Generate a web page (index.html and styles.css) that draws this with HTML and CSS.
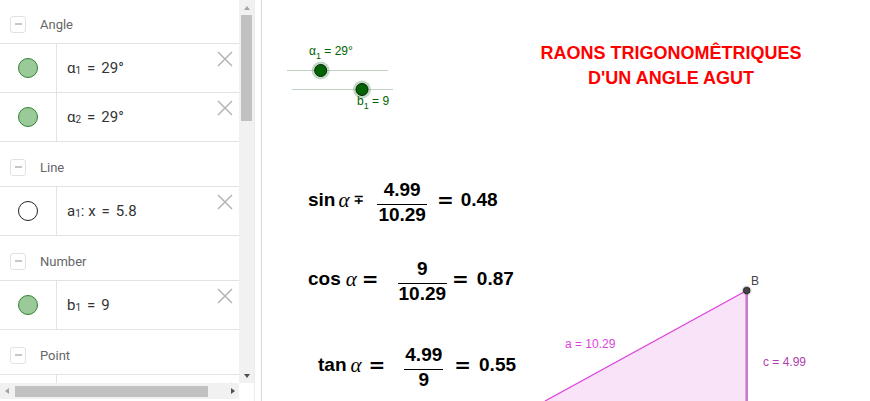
FILE: index.html
```html
<!DOCTYPE html>
<html>
<head>
<meta charset="utf-8">
<link rel="stylesheet" href="styles.css">
</head>
<body>
<div class="app">
  <div class="algebra">
    <div class="list">
      <div class="list-inner">
        <div class="group-head"><span class="minus"></span><span class="gname">Angle</span></div>
        <div class="item">
          <div class="marker"><span class="dot green"></span></div>
          <div class="def">α<sub>1</sub><span class="eqs">=</span>29°</div>
          <svg class="close" viewBox="0 0 16 16"><path d="M1 1L15 15M15 1L1 15"/></svg>
        </div>
        <div class="item">
          <div class="marker"><span class="dot green"></span></div>
          <div class="def">α<sub>2</sub><span class="eqs">=</span>29°</div>
          <svg class="close" viewBox="0 0 16 16"><path d="M1 1L15 15M15 1L1 15"/></svg>
        </div>
        <div class="group-head"><span class="minus"></span><span class="gname">Line</span></div>
        <div class="item">
          <div class="marker"><span class="dot empty"></span></div>
          <div class="def">a<sub>1</sub>: x<span class="eqs">=</span>5.8</div>
          <svg class="close" viewBox="0 0 16 16"><path d="M1 1L15 15M15 1L1 15"/></svg>
        </div>
        <div class="group-head"><span class="minus"></span><span class="gname">Number</span></div>
        <div class="item">
          <div class="marker"><span class="dot green"></span></div>
          <div class="def">b<sub>1</sub><span class="eqs">=</span>9</div>
          <svg class="close" viewBox="0 0 16 16"><path d="M1 1L15 15M15 1L1 15"/></svg>
        </div>
        <div class="group-head"><span class="minus"></span><span class="gname">Point</span></div>
        <div class="item">
          <div class="marker"></div>
          <div class="def"></div>
          <svg class="close" viewBox="0 0 16 16"><path d="M1 1L15 15M15 1L1 15"/></svg>
        </div>
      </div>
    </div>
    <div class="vscroll">
      <div class="arrow-box"><span class="tri-up"></span></div>
      <div class="vthumb"></div>
      <div class="spacer"></div>
      <div class="arrow-box"><span class="tri-down"></span></div>
    </div>
    <div class="hscroll">
      <div class="harrow-box"><span class="tri-left"></span></div>
      <div class="hthumb"></div>
      <div class="spacer"></div>
      <div class="harrow-box"><span class="tri-right"></span></div>
    </div>
    <div class="corner"></div>
  </div>
  <div class="splitter"></div>
  <div class="graphics">
    <svg class="canvas" viewBox="262 0 608 401" width="608" height="401">
      <polygon points="746.7,290.5 545,401 746.7,401" fill="#f8e3f8"/>
      <line x1="746.7" y1="290.5" x2="545" y2="401" stroke="#dd44dd" stroke-width="1.3"/>
      <line x1="746.7" y1="290.5" x2="746.7" y2="401" stroke="#c97bc9" stroke-width="2.6"/>
      <circle cx="746.7" cy="290.5" r="5" fill="#555" fill-opacity="0.2"/>
      <circle cx="746.7" cy="290.5" r="3.3" fill="#444" stroke="#1a1a1a" stroke-width="0.8"/>
      <text class="lbl" x="751" y="285" fill="#444">B</text>
      <text class="lbl" x="565" y="348" fill="#dd44dd">a = 10.29</text>
      <text class="lbl" x="763" y="366" fill="#b040b0">c = 4.99</text>

      <line x1="287" y1="70.5" x2="388" y2="70.5" stroke="#c2d2c2" stroke-width="1.2"/>
      <circle cx="320.7" cy="70.5" r="9" fill="#4f8f4f" fill-opacity="0.35"/>
      <circle cx="320.7" cy="70.5" r="6" fill="#006400" stroke="#0b1f0b" stroke-width="1"/>
      <text class="slbl" x="309" y="55">α<tspan dy="3.5" font-size="9">1</tspan><tspan dy="-3.5"> = 29°</tspan></text>

      <line x1="292" y1="89.5" x2="393" y2="89.5" stroke="#c2d2c2" stroke-width="1.2"/>
      <circle cx="362" cy="89.5" r="9" fill="#4f8f4f" fill-opacity="0.35"/>
      <circle cx="362" cy="89.5" r="6" fill="#006400" stroke="#0b1f0b" stroke-width="1"/>
      <text class="slbl" x="357" y="105">b<tspan dy="3.5" font-size="9">1</tspan><tspan dy="-3.5"> = 9</tspan></text>
    </svg>

    <div class="title">RAONS TRIGONOMÊTRIQUES<br>D'UN ANGLE AGUT</div>

    <div class="formula f-sin">
      <span class="fn">sin</span><span class="alpha">α</span><span class="mp">∓</span>
      <span class="frac"><span class="num">4.99</span><span class="bar"></span><span class="den">10.29</span></span>
      <span class="eq">=</span><span class="val">0.48</span>
    </div>
    <div class="formula f-cos">
      <span class="fn">cos</span><span class="alpha">α</span><span class="eq eq1">=</span>
      <span class="frac"><span class="num">9</span><span class="bar"></span><span class="den">10.29</span></span>
      <span class="eq eq2">=</span><span class="val">0.87</span>
    </div>
    <div class="formula f-tan">
      <span class="fn">tan</span><span class="alpha">α</span><span class="eq eq1">=</span>
      <span class="frac"><span class="num">4.99</span><span class="bar"></span><span class="den">9</span></span>
      <span class="eq eq2">=</span><span class="val">0.55</span>
    </div>
  </div>
</div>
</body>
</html>
```
FILE: styles.css
```css
* { box-sizing: border-box; }
html, body { margin: 0; padding: 0; }
body {
  width: 870px;
  height: 401px;
  overflow: hidden;
  background: #fff;
  font-family: Roboto, "Liberation Sans", sans-serif;
}
.app { display: flex; width: 870px; height: 401px; }

/* ---------- algebra view ---------- */
.algebra {
  width: 254px;
  flex: none;
  display: grid;
  grid-template-columns: 239px 15px;
  grid-template-rows: 383px 18px;
}
.list { grid-column: 1; grid-row: 1; overflow: hidden; }
.list-inner { margin-top: -1px; }
.group-head {
  height: 45px;
  padding-top: 6px;
  display: flex;
  align-items: center;
  border-bottom: 1px solid #e3e3e3;
}
.minus {
  width: 16px;
  height: 17px;
  margin-left: 10px;
  border: 1px solid #e2e2e2;
  border-radius: 3px;
  display: flex;
  align-items: center;
  justify-content: center;
}
.minus::before { content: ""; width: 7px; height: 1.5px; background: #c6c6c6; }
.gname { margin-left: 14px; font-size: 13px; color: #666; }

.item {
  height: 49px;
  display: flex;
  border-bottom: 1px solid #e3e3e3;
}
.marker {
  width: 57px;
  flex: none;
  border-right: 1px solid #e3e3e3;
  display: flex;
  align-items: center;
  justify-content: center;
  padding-bottom: 1px;
}
.dot { width: 20px; height: 20px; border-radius: 50%; }
.dot.green { background: #9ac99a; border: 1px solid #2f842f; }
.dot.empty { background: #fff; border: 1px solid #222; }
.def {
  flex: 1;
  padding-left: 10px;
  display: flex;
  align-items: center;
  font-size: 15px;
  color: #333;
  padding-bottom: 1px;
}
.def sub { font-size: 10px; position: relative; top: 3px; vertical-align: baseline; }
.eqs { margin: 0 6px; }
.close {
  width: 16px;
  height: 16px;
  margin: 7px 6px 0 0;
  flex: none;
  fill: none;
  stroke: #b5b5b5;
  stroke-width: 1.5;
}

.vscroll {
  grid-column: 2;
  grid-row: 1;
  background: #f1f1f1;
  display: flex;
  flex-direction: column;
  align-items: center;
}
.arrow-box { height: 15px; width: 15px; display: flex; align-items: center; justify-content: center; flex: none; }
.tri-up { width: 0; height: 0; border-left: 3.5px solid transparent; border-right: 3.5px solid transparent; border-bottom: 4px solid #a3a3a3; }
.tri-down { width: 0; height: 0; border-left: 3.5px solid transparent; border-right: 3.5px solid transparent; border-top: 4px solid #505050; }
.vthumb { width: 11px; height: 106px; background: #c1c1c1; flex: none; }
.spacer { flex: 1; }

.hscroll {
  grid-column: 1;
  grid-row: 2;
  height: 16px;
  background: #f1f1f1;
  display: flex;
  align-items: center;
}
.harrow-box { width: 15px; height: 16px; display: flex; align-items: center; justify-content: center; flex: none; }
.tri-left { width: 0; height: 0; border-top: 3.5px solid transparent; border-bottom: 3.5px solid transparent; border-right: 4px solid #a3a3a3; margin-left: -2px; }
.tri-right { width: 0; height: 0; border-top: 3.5px solid transparent; border-bottom: 3.5px solid transparent; border-left: 4px solid #505050; margin-left: 3px; }
.hthumb { width: 193px; height: 11px; background: #c1c1c1; flex: none; }
.corner { grid-column: 2; grid-row: 2; background: #fff; }

.splitter {
  width: 8px;
  flex: none;
  background: #fff;
  border-left: 1px solid #ececec;
  border-right: 1px solid #d9d9d9;
}

/* ---------- graphics view ---------- */
.graphics { flex: 1; position: relative; overflow: hidden; }
.canvas { position: absolute; left: 0; top: 0; }
.lbl { font-family: "Liberation Sans", Arial, sans-serif; font-size: 12px; }
.slbl { font-family: "Liberation Sans", Arial, sans-serif; font-size: 12px; fill: #006400; }

.title {
  position: absolute;
  left: 259px;
  top: 41px;
  width: 300px;
  text-align: center;
  font-family: "Liberation Sans", Arial, sans-serif;
  font-weight: bold;
  font-size: 18px;
  line-height: 25px;
  color: #ff0000;
}

.formula {
  position: absolute;
  height: 50px;
  display: flex;
  align-items: center;
  font-family: "Liberation Sans", Arial, sans-serif;
  font-weight: bold;
  font-size: 19px;
  line-height: 18px;
  color: #000;
}
.f-sin { left: 46px; top: 175px; }
.f-cos { left: 46px; top: 254px; }
.f-tan { left: 56px; top: 340px; }

.alpha {
  font-family: "Liberation Serif", "DejaVu Serif", serif;
  font-style: italic;
  font-weight: normal;
  font-size: 21px;
}
.mp { font-family: "DejaVu Sans", sans-serif; font-size: 13px; font-weight: bold; }
.eq { font-family: "DejaVu Sans", sans-serif; font-size: 20px; font-weight: bold; }
.frac {
  display: inline-flex;
  flex-direction: column;
  align-items: center;
  margin-top: 4px;
}
.num, .den { padding: 0 1px; }
.num { margin-bottom: 5px; }
.bar { align-self: stretch; height: 1.5px; background: #000; }
.den { margin-top: 0.5px; }

.f-sin .alpha { margin-left: 3px; }
.f-sin .mp { margin-left: 4px; }
.f-sin .frac { margin-left: 13px; }
.f-sin .eq { margin-left: 10px; }
.f-sin .val { margin-left: 7px; }

.f-cos .alpha { margin-left: 5px; }
.f-cos .eq1 { margin-left: 5px; }
.f-cos .frac { margin-left: 19px; }
.f-cos .eq2 { margin-left: 5px; }
.f-cos .val { margin-left: 8px; }

.f-tan .alpha { margin-left: 4px; }
.f-tan .eq1 { margin-left: 7px; }
.f-tan .frac { margin-left: 19px; }
.f-tan .eq2 { margin-left: 11px; }
.f-tan .val { margin-left: 8px; }
```
